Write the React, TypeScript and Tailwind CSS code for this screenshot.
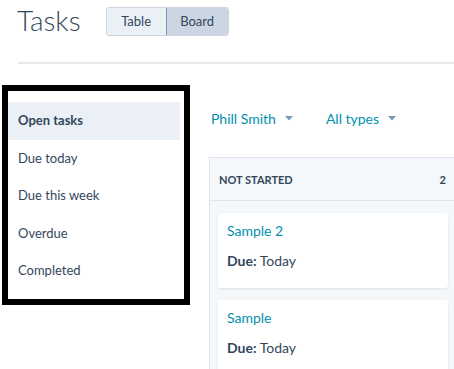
import React from "react";

const Caret = () => (
  <svg width="8" height="5" viewBox="0 0 8 5" className="ml-[9px] mt-[1px]">
    <path d="M0 0 L8 0 L4 4.5 Z" fill="#7c98b6" />
  </svg>
);

export default function App() {
  const items = ["Open tasks", "Due today", "Due this week", "Overdue", "Completed"];
  return (
    <div
      className="w-[454px] h-[369px] overflow-hidden bg-white text-[#33475b]"
      style={{ fontFamily: "Lato, 'Noto Sans', sans-serif" }}
    >
      <div className="flex items-center pl-[17px] pt-[7px] h-[36px]">
        <div className="text-[28px] font-light leading-none -mt-[3px]">Tasks</div>
        <div className="ml-[25px] flex h-[29px] rounded-[3px] border border-[#cbd6e2] overflow-hidden text-[13px]">
          <div className="w-[59px] flex items-center justify-center bg-[#eaf0f6] text-[#33475b]">Table</div>
          <div className="w-[62px] flex items-center justify-center bg-[#cbd6e2] border-l border-[#7c98b6] text-[#33475b]">Board</div>
        </div>
      </div>
      <div className="ml-[18px] mt-[26px] h-[2px] bg-[#e5e9ee]" />
      <div className="flex mt-[21px]">
        <div className="ml-[2px] w-[188px] h-[220px] border-[6px] border-black shrink-0 pt-[11px]">
          {items.map((t, i) => (
            <div
              key={t}
              className={
                "h-[37.5px] flex items-center pl-[10px] mr-[4px] text-[13px] " +
                (i === 0 ? "bg-[#eaf0f6] font-bold" : "")
              }
            >
              {t}
            </div>
          ))}
        </div>
        <div className="ml-[19px] shrink-0">
          <div className="flex items-center h-[34px] mt-[16px] pl-[2px] text-[14px] text-[#0091ae]">
            <span>Phill Smith</span>
            <Caret />
            <span className="ml-[33px]">All types</span>
            <Caret />
          </div>
          <div className="mt-[22px] w-[248px] h-[220px] border border-[#dfe3eb] bg-[#f5f8fa]">
            <div className="h-[43px] pt-[3px] flex items-center justify-between pl-[9px] pr-[10px] border-b border-[#dfe3eb] text-[11px] font-bold">
              <span>NOT STARTED</span>
              <span>2</span>
            </div>
            <div className="pl-[8px] pt-[12px] flex flex-col gap-[12px]">
              {["Sample 2", "Sample"].map((s) => (
                <div
                  key={s}
                  className="w-[230px] h-[75px] bg-white rounded-[3px] shadow-[0_1px_3px_rgba(45,62,80,0.12)] px-[9px] pt-[9px]"
                >
                  <div className="text-[14px] text-[#0091ae] leading-[18px]">{s}</div>
                  <div className="text-[14px] mt-[12px] leading-[18px]">
                    <span className="font-bold">Due:</span> Today
                  </div>
                </div>
              ))}
            </div>
          </div>
        </div>
      </div>
    </div>
  );
}
